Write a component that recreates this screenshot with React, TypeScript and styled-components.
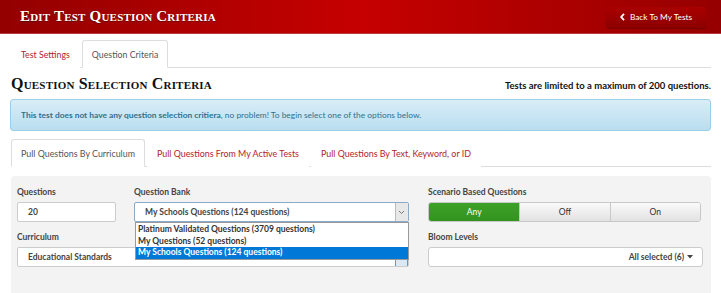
import styled, { createGlobalStyle } from "styled-components";

const GlobalStyle = createGlobalStyle`
body {
    margin: 0;
    background: #fff;
    font-family: Lato, "Liberation Sans", sans-serif;
}
`

const Page = styled.div`
width: 721px;
height: 293px;
overflow: hidden;
`

const Header = styled.div`
height: 34px;
display: flex;
align-items: center;
justify-content: space-between;
padding: 0 15px 0 20px;
background: linear-gradient(to right, #930000, #c60000 50%, #960000);
border-bottom: 1px solid #b83a3a;
box-sizing: border-box;
`

const Title = styled.h1`
margin: 0;
color: #fff;
font-family: "Liberation Serif", serif;
font-weight: bold;
font-variant: small-caps;
font-size: 15px;
letter-spacing: 0.2px;
text-shadow: 0 1px 1px rgba(0, 0, 0, 0.4);
`

const BackButton = styled.button`
height: 21px;
width: 100px;
margin-top: 1px;
border: none;
border-radius: 3px;
background: linear-gradient(to bottom, #aa0000, #8c0000);
box-shadow: 0 1px 1px rgba(0, 0, 0, 0.25);
color: #fff;
font-family: Lato, sans-serif;
font-size: 8.3px;
display: flex;
align-items: center;
justify-content: center;
gap: 5px;
`

const Content = styled.div`
padding: 6px 10px 0 10px;
`

const TabBar = styled.div<{ $size: number }>`
display: flex;
border-bottom: 1px solid #ddd;
height: 27px;
font-size: ${p => p.$size}px;
`

const Tab = styled.div<{ $active?: boolean, $first?: boolean }>`
display: flex;
align-items: center;
padding: 0 9px 0 ${p => p.$first ? 10 : 9}px;
color: ${p => p.$active ? "#555" : "#b3232a"};
border: 1px solid ${p => p.$active ? "#ddd" : "transparent"};
border-bottom-color: ${p => p.$active ? "#fff" : "transparent"};
border-radius: 3px 3px 0 0;
background: #fff;
margin-bottom: -1px;
margin-right: 2px;
`

const TitleRow = styled.div`
display: flex;
justify-content: space-between;
align-items: flex-end;
margin-top: 8px;
height: 16px;
`

const SectionTitle = styled.h2`
margin: 0 0 0 1px;
color: #111;
font-family: "Liberation Serif", serif;
font-weight: bold;
font-variant: small-caps;
font-size: 16px;
line-height: 16px;
letter-spacing: 0.2px;
`

const Limit = styled.span`
font-size: 9.5px;
font-weight: bold;
color: #111;
padding-bottom: 1px;
`

const Alert = styled.div`
margin-top: 7px;
height: 32px;
box-sizing: border-box;
display: flex;
align-items: center;
padding-left: 10px;
background: linear-gradient(to bottom, #d9edf7, #b9def0);
border: 1px solid #9acfea;
border-radius: 3px;
color: #31708f;
font-size: 8.4px;
`

const InnerTabs = styled(TabBar)`
margin-top: 8px;
margin-left: 1px;
`

const Panel = styled.div`
margin: 9px 0 0 1px;
height: 141px;
background: #f3f3f3;
border-radius: 4px;
padding: 11px 8px 0 6px;
box-sizing: border-box;
display: grid;
grid-template-columns: 392px 1fr;
column-gap: 19px;
position: relative;
`

const Column = styled.div`
display: flex;
flex-direction: column;
`

const FieldRow = styled.div`
display: grid;
grid-template-columns: 99px 1fr;
column-gap: 18px;
`

const Field = styled.div`
display: flex;
flex-direction: column;
position: relative;
margin-bottom: 10px;
`

const Label = styled.label`
font-size: 8.5px;
font-weight: bold;
color: #444;
height: 15px;
line-height: 11px;
`

const Input = styled.div`
height: 20px;
box-sizing: border-box;
background: #fff;
border: 1px solid #ccc;
border-radius: 2px;
display: flex;
align-items: center;
padding-left: 10px;
font-size: 8.5px;
font-weight: bold;
color: #444;
`

const Select = styled(Input)<{ $focus?: boolean }>`
padding-left: 10px;
justify-content: space-between;
padding-right: 0;
border-color: ${p => p.$focus ? "#8aaac8" : "#ccc"};
`

const Arrow = styled.span<{ $blue?: boolean }>`
width: 11px;
height: 18px;
display: flex;
align-items: center;
justify-content: center;
background: ${p => p.$blue ? "#dbe9f7" : "#e8e8e8"};
border-left: 1px solid ${p => p.$blue ? "#5c9ad6" : "#bbb"};
border-right: 1px solid ${p => p.$blue ? "#5c9ad6" : "transparent"};
`

const Dropdown = styled.ul`
position: absolute;
left: 1px;
right: 0;
top: 35px;
margin: 0;
padding: 1px 0 0 0;
list-style: none;
background: #fff;
border: 1px solid #999;
z-index: 2;
`

const Option = styled.li<{ $selected?: boolean }>`
height: 11.5px;
line-height: 11.5px;
padding-left: 2px;
font-size: 8.5px;
font-weight: bold;
color: ${p => p.$selected ? "#fff" : "#333"};
background: ${p => p.$selected ? "#0078d7" : "transparent"};
`

const Toggle = styled.div`
display: grid;
grid-template-columns: repeat(3, 1fr);
height: 20px;
width: 273px;
border: 1px solid #c8c8c8;
border-radius: 3px;
box-sizing: border-box;
overflow: hidden;
`

const ToggleButton = styled.div<{ $active?: boolean }>`
display: flex;
align-items: center;
justify-content: center;
font-size: 8.5px;
color: ${p => p.$active ? "#fff" : "#333"};
background: ${p => p.$active ? "linear-gradient(#3da126, #33931f)" : "linear-gradient(#fafafa, #e2e2e2)"};
border-left: 1px solid ${p => p.$active ? "transparent" : "#c8c8c8"};
&:first-child { border-left: none; }
`

const MultiSelect = styled(Input)`
justify-content: flex-end;
padding-right: 9px;
border-radius: 3px;
gap: 3px;
`

const Rule = styled.div`
position: absolute;
left: 6px;
right: 8px;
bottom: 3px;
border-top: 1px solid #e2e2e2;
`

const Chevron = ({ color = "#777" }: { color?: string }) => (
    <svg width="7" height="5" viewBox="0 0 7 5">
        <path d="M1 1 L3.5 3.5 L6 1" fill="none" stroke={color} strokeWidth="1" />
    </svg>
)

const App = () => {
    return (
        <Page>
            <GlobalStyle />
            <Header>
                <Title>Edit Test Question Criteria</Title>
                <BackButton>
                    <svg width="5" height="8" viewBox="0 0 5 8">
                        <path d="M4 0.8 L1.2 4 L4 7.2" fill="none" stroke="#fff" strokeWidth="1.8" />
                    </svg>
                    Back To My Tests
                </BackButton>
            </Header>
            <Content>
                <TabBar $size={8.8}>
                    <Tab $first>Test Settings</Tab>
                    <Tab $active>Question Criteria</Tab>
                </TabBar>
                <TitleRow>
                    <SectionTitle>Question Selection Criteria</SectionTitle>
                    <Limit>Tests are limited to a maximum of 200 questions.</Limit>
                </TitleRow>
                <Alert>
                    <span><b>This test does not have any question selection critiera</b>, no problem! To begin select one of the options below.</span>
                </Alert>
                <InnerTabs $size={8.9}>
                    <Tab $active>Pull Questions By Curriculum</Tab>
                    <Tab>Pull Questions From My Active Tests</Tab>
                    <Tab>Pull Questions By Text, Keyword, or ID</Tab>
                </InnerTabs>
                <Panel>
                    <Column>
                        <FieldRow>
                            <Field>
                                <Label>Questions</Label>
                                <Input>20</Input>
                            </Field>
                            <Field>
                                <Label>Question Bank</Label>
                                <Select $focus>
                                    My Schools Questions (124 questions)
                                    <Arrow><Chevron /></Arrow>
                                </Select>
                                <Dropdown>
                                    <Option>Platinum Validated Questions (3709 questions)</Option>
                                    <Option>My Questions (52 questions)</Option>
                                    <Option $selected>My Schools Questions (124 questions)</Option>
                                </Dropdown>
                            </Field>
                        </FieldRow>
                        <Field>
                            <Label>Curriculum</Label>
                            <Select>
                                Educational Standards
                                <Arrow $blue><Chevron color="#333" /></Arrow>
                            </Select>
                        </Field>
                    </Column>
                    <Column>
                        <Field>
                            <Label>Scenario Based Questions</Label>
                            <Toggle>
                                <ToggleButton $active>Any</ToggleButton>
                                <ToggleButton>Off</ToggleButton>
                                <ToggleButton>On</ToggleButton>
                            </Toggle>
                        </Field>
                        <Field>
                            <Label>Bloom Levels</Label>
                            <MultiSelect>
                                All selected (6)
                                <svg width="6" height="4" viewBox="0 0 6 4"><path d="M0 0 L6 0 L3 3.5 Z" fill="#444" /></svg>
                            </MultiSelect>
                        </Field>
                    </Column>
                    <Rule />
                </Panel>
            </Content>
        </Page>
    );
}

export default App;
